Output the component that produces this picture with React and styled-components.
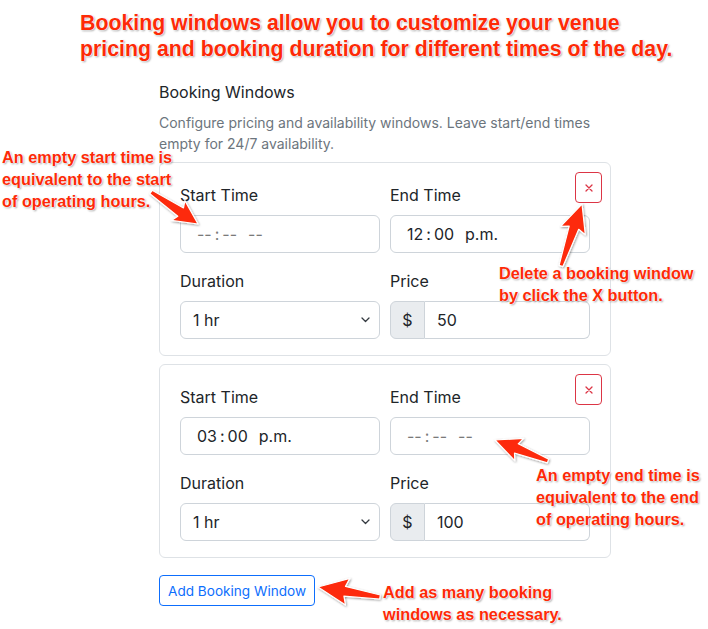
import React from 'react'
import styled, { createGlobalStyle } from 'styled-components'

const RED = '#fd2a07'

const GlobalStyle = createGlobalStyle`
  html, body {
    margin: 0;
    padding: 0;
    background: #fff;
  }
  body {
    font-family: Inter, "Noto Sans", sans-serif;
    color: #212529;
  }
`

const Page = styled.div`
  position: relative;
  width: 708px;
  min-height: 629px;
  padding-top: 10px;
  box-sizing: border-box;
  overflow: hidden;
`

const calloutShadow = `
  0 0 1px #fff, 0 0 1px #fff, 0 0 2px #fff, 0 0 2px #fff,
  1px 1px 2px rgba(0, 0, 0, 0.45)
`

const Title = styled.h1`
  margin: 0 0 0 80px;
  font: 700 21.3px/26px "Liberation Sans", Arial, sans-serif;
  color: ${RED};
  text-shadow: ${calloutShadow};
`

const Form = styled.div`
  width: 452px;
  margin: 18px 0 0 159px;
`

const Heading = styled.h2`
  margin: 0 0 8px;
  font-size: 16px;
  line-height: 24px;
  font-weight: 400;
`

const Help = styled.p`
  margin: 0 0 8px;
  font-size: 14px;
  line-height: 21px;
  color: #6c757d;
`

const Card = styled.div`
  position: relative;
  border: 1px solid #dee2e6;
  border-radius: 6px;
  padding: 20px 20px 16px;
  & + & {
    margin-top: 8px;
  }
`

const DeleteButton = styled.button`
  position: absolute;
  top: 9px;
  right: 8px;
  width: 27px;
  height: 31px;
  padding: 0;
  display: flex;
  align-items: center;
  justify-content: center;
  background: #fff;
  border: 1px solid #dc3545;
  border-radius: 4px;
`

const FieldGrid = styled.div`
  display: grid;
  grid-template-columns: 200px 200px;
  column-gap: 10px;
  row-gap: 16px;
`

const Label = styled.div`
  font-size: 16px;
  line-height: 24px;
  margin-bottom: 8px;
`

const Control = styled.div`
  height: 38px;
  box-sizing: border-box;
  border: 1px solid #ced4da;
  border-radius: 6px;
  display: flex;
  align-items: center;
  font-size: 16px;
  background: #fff;
`

const TimeBox = styled(Control)`
  padding-left: 16px;
  color: ${p => (p.$empty ? '#7a7a7a' : '#212529')};
`

const Colon = styled.span`
  margin: 0 3px;
`

const Meridiem = styled.span`
  margin-left: 11px;
`

const SelectBox = styled(Control)`
  justify-content: space-between;
  padding: 0 9px 0 12px;
`

const PriceGroup = styled.div`
  display: flex;
  height: 38px;
`

const Addon = styled.div`
  width: 35px;
  box-sizing: border-box;
  display: flex;
  align-items: center;
  justify-content: center;
  background: #e9ecef;
  border: 1px solid #ced4da;
  border-radius: 6px 0 0 6px;
  font-size: 16px;
`

const PriceValue = styled(Control)`
  flex: 1;
  border-left: none;
  border-radius: 0 6px 6px 0;
  padding-left: 12px;
`

const AddButton = styled.button`
  margin-top: 17px;
  height: 31px;
  padding: 0 8px;
  font-family: Inter, "Noto Sans", sans-serif;
  font-size: 13.6px;
  color: #0d6efd;
  background: #fff;
  border: 1px solid #0d6efd;
  border-radius: 4px;
`

const Callout = styled.div`
  position: absolute;
  left: ${p => p.$x}px;
  top: ${p => p.$y}px;
  font: 700 16.3px/22px "Liberation Sans", Arial, sans-serif;
  color: ${RED};
  white-space: nowrap;
  text-shadow: ${calloutShadow};
`

const ArrowLayer = styled.svg`
  position: absolute;
  left: 0;
  top: 0;
  pointer-events: none;
  overflow: visible;
`

function TimeValue({ value }) {
  if (!value) {
    return (
      <TimeBox $empty>
        <span>--</span>
        <Colon>:</Colon>
        <span>--</span>
        <Meridiem>--</Meridiem>
      </TimeBox>
    )
  }
  const [h, m, ampm] = value
  return (
    <TimeBox>
      <span>{h}</span>
      <Colon>:</Colon>
      <span>{m}</span>
      <Meridiem>{ampm}</Meridiem>
    </TimeBox>
  )
}

function Chevron() {
  return (
    <svg width="9" height="6" viewBox="0 0 9 6">
      <path d="M1 1l3.5 3.5L8 1" fill="none" stroke="#343a40" strokeWidth="1.3" strokeLinecap="round" strokeLinejoin="round" />
    </svg>
  )
}

function CloseMark() {
  return (
    <svg width="8" height="8" viewBox="0 0 8 8">
      <path d="M1 1l6 6M7 1L1 7" stroke="#dc3545" strokeWidth="1.3" strokeLinecap="round" />
    </svg>
  )
}

function WindowCard({ start, end, duration, price }) {
  return (
    <Card>
      <DeleteButton>
        <CloseMark />
      </DeleteButton>
      <FieldGrid>
        <div>
          <Label>Start Time</Label>
          <TimeValue value={start} />
        </div>
        <div>
          <Label>End Time</Label>
          <TimeValue value={end} />
        </div>
        <div>
          <Label>Duration</Label>
          <SelectBox>
            <span>{duration}</span>
            <Chevron />
          </SelectBox>
        </div>
        <div>
          <Label>Price</Label>
          <PriceGroup>
            <Addon>$</Addon>
            <PriceValue>{price}</PriceValue>
          </PriceGroup>
        </div>
      </FieldGrid>
    </Card>
  )
}

// tapered arrow polygon from tail to tip
function arrowPoints([tx, ty], [px, py], headLen, headW, tailW = 4, neckW = 10) {
  const len = Math.hypot(px - tx, py - ty)
  const dx = (px - tx) / len
  const dy = (py - ty) / len
  const nx = -dy
  const ny = dx
  const bx = px - dx * headLen
  const by = py - dy * headLen
  const pt = (x, y) => `${x.toFixed(1)},${y.toFixed(1)}`
  return [
    pt(tx + (nx * tailW) / 2, ty + (ny * tailW) / 2),
    pt(bx + (nx * neckW) / 2, by + (ny * neckW) / 2),
    pt(bx - dx * 3 + (nx * headW) / 2, by - dy * 3 + (ny * headW) / 2),
    pt(px, py),
    pt(bx - dx * 3 - (nx * headW) / 2, by - dy * 3 - (ny * headW) / 2),
    pt(bx - (nx * neckW) / 2, by - (ny * neckW) / 2),
    pt(tx - (nx * tailW) / 2, ty - (ny * tailW) / 2),
  ].join(' ')
}

const arrows = [
  { tail: [151, 192], tip: [198, 224], head: 21, width: 24 },
  { tail: [561, 266], tip: [582, 204], head: 25, width: 26 },
  { tail: [548, 461], tip: [495, 440], head: 23, width: 24 },
  { tail: [380, 597], tip: [318, 587], head: 27, width: 27 },
]

export default function App() {
  return (
    <Page>
      <GlobalStyle />
      <Title>
        Booking windows allow you to customize your venue
        <br />
        pricing and booking duration for different times of the day.
      </Title>
      <Form>
        <Heading>Booking Windows</Heading>
        <Help>
          Configure pricing and availability windows. Leave start/end times
          empty for 24/7 availability.
        </Help>
        <WindowCard start={null} end={['12', '00', 'p.m.']} duration="1 hr" price="50" />
        <WindowCard start={['03', '00', 'p.m.']} end={null} duration="1 hr" price="100" />
        <AddButton>Add Booking Window</AddButton>
      </Form>

      <Callout $x={2} $y={146}>
        An empty start time is
        <br />
        equivalent to the start
        <br />
        of operating hours.
      </Callout>
      <Callout $x={499} $y={262}>
        Delete a booking window
        <br />
        by click the X button.
      </Callout>
      <Callout $x={536} $y={464}>
        An empty end time is
        <br />
        equivalent to the end
        <br />
        of operating hours.
      </Callout>
      <Callout $x={383} $y={581}>
        Add as many booking
        <br />
        windows as necessary.
      </Callout>

      <ArrowLayer width="708" height="629" viewBox="0 0 708 629">
        <defs>
          <filter id="arrowShadow" x="-20%" y="-20%" width="140%" height="140%">
            <feDropShadow dx="0.8" dy="1" stdDeviation="0.9" floodColor="#000" floodOpacity="0.4" />
          </filter>
        </defs>
        {arrows.map((a, i) => (
          <polygon
            key={i}
            points={arrowPoints(a.tail, a.tip, a.head, a.width)}
            fill={RED}
            stroke="#fff"
            strokeWidth="1.2"
            strokeLinejoin="round"
            filter="url(#arrowShadow)"
          />
        ))}
      </ArrowLayer>
    </Page>
  )
}
